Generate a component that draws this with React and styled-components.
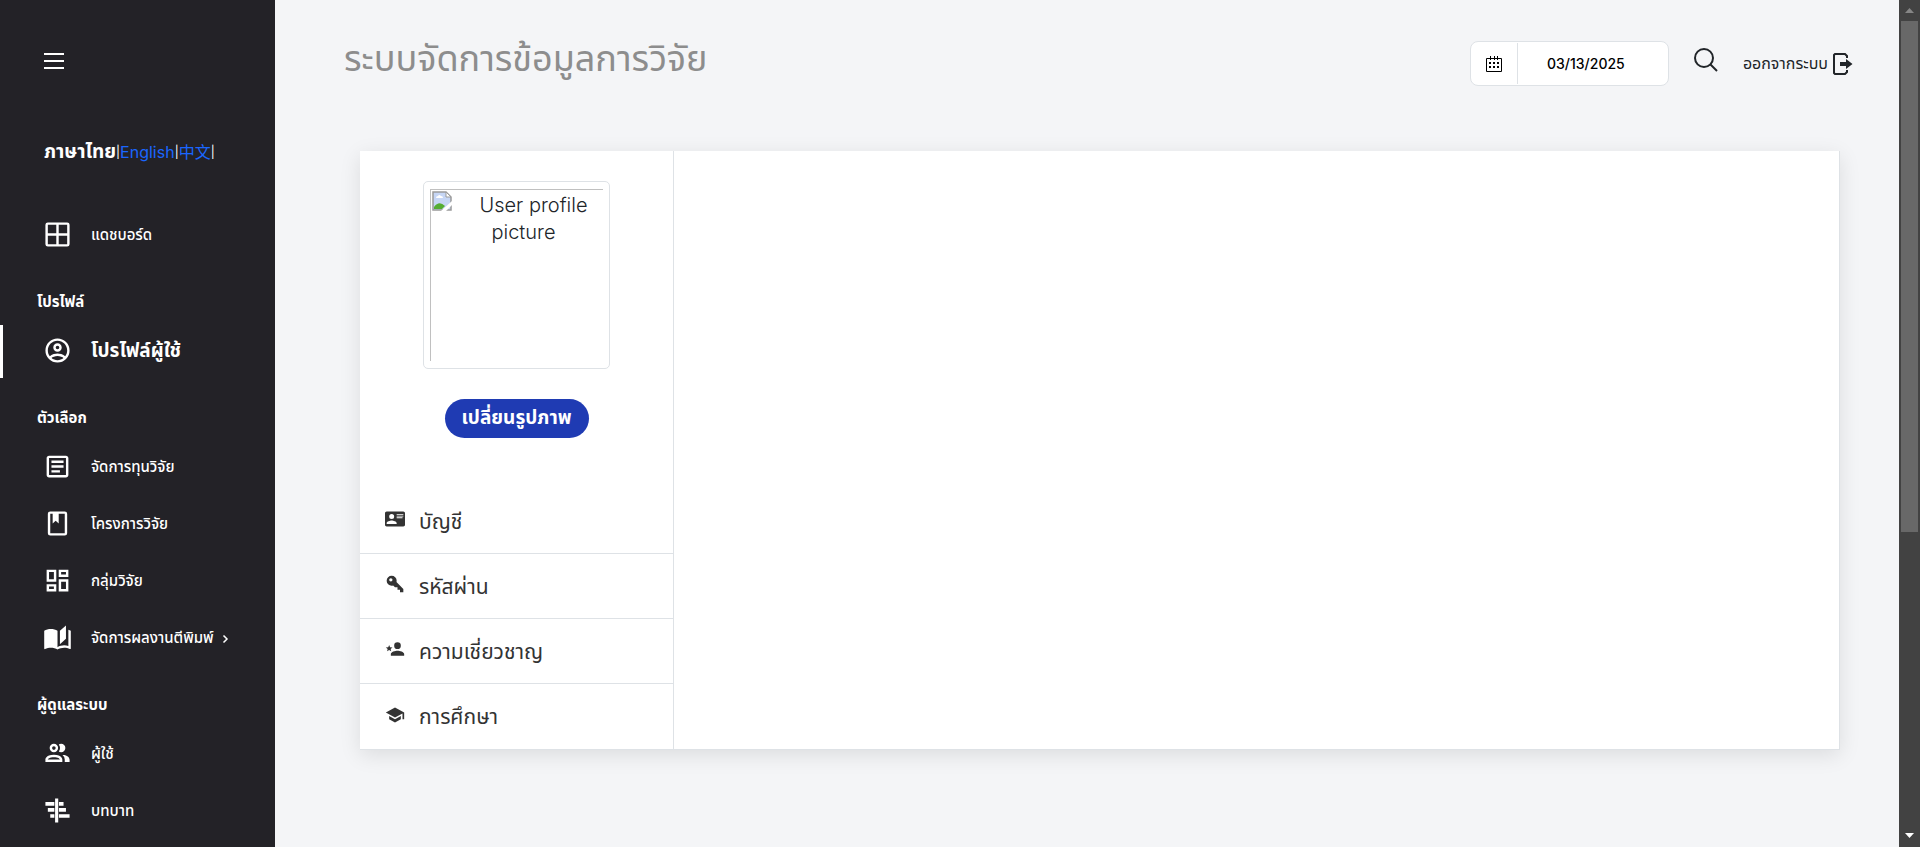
import React from 'react';
import styled, { createGlobalStyle } from 'styled-components';

const GlobalStyle = createGlobalStyle`
  *, *::before, *::after { box-sizing: border-box; }
  body {
    margin: 0;
    background: #f4f5f7;
    color: #212529;
    font-family: Inter, "Noto Sans", "Noto Sans Thai", Tahoma, "Noto Sans CJK SC", sans-serif;
    font-size: 16px;
  }
  a { color: inherit; text-decoration: none; }
  button { font: inherit; color: inherit; cursor: pointer; }
  h1, h2, p { margin: 0; padding: 0; }
`;

const Page = styled.div`
  display: flex;
  min-height: 100vh;
`;

const Sidebar = styled.aside`
  width: 275px;
  flex: none;
  background: #232227;
  color: #fff;
`;

const MenuButton = styled.button`
  display: flex;
  margin: 48px 0 0 42px;
  padding: 0;
  border: 0;
  background: none;
  color: #fff;
`;

const Languages = styled.div`
  display: flex;
  align-items: center;
  height: 24px;
  margin: 66px 0 45px 44px;
  line-height: 24px;
  white-space: nowrap;

  b { font-size: 19px; }
  a { color: #1a66ff; }
`;

const Divider = styled.span`
  font-size: 12px;
`;

const NavHeading = styled.h2`
  padding: 25px 0 12px 37px;
  font-size: 15px;
  line-height: 22px;
  font-weight: 700;
`;

const NavLink = styled.a`
  display: flex;
  align-items: center;
  gap: 19px;
  height: 53px;
  margin-bottom: 4px;
  padding-left: 40px;
  border-left: 3px solid ${(p) => (p.$active ? '#fff' : 'transparent')};
  font-size: ${(p) => (p.$active ? 19 : 15)}px;
  font-weight: ${(p) => (p.$active ? 700 : 500)};
  white-space: nowrap;

  > svg { margin-bottom: 2px; }
`;

const LinkText = styled.span`
  display: flex;
  align-items: center;
  gap: 6px;
`;

const Main = styled.main`
  flex: 1;
  min-width: 0;
`;

const Header = styled.header`
  display: flex;
  align-items: center;
  padding: 36px 46px 0 69px;
`;

const Title = styled.h1`
  flex: 1;
  height: 55px;
  color: #8d8d8d;
  font-size: 36px;
  line-height: 44px;
  font-weight: 400;
  white-space: nowrap;
`;

const DateField = styled.label`
  display: flex;
  align-items: center;
  width: 199px;
  height: 45px;
  border: 1px solid #dee2e6;
  border-radius: 8px;
  background: #fff;
  color: #000;
`;

const DateIcon = styled.span`
  display: flex;
  align-items: center;
  justify-content: center;
  width: 47px;
  height: 41px;
  border-right: 1px solid #dee2e6;
`;

const DateInput = styled.input`
  flex: 1;
  min-width: 0;
  padding: 0 14px 0 0;
  border: 0;
  outline: 0;
  background: none;
  color: #000;
  font: 500 14px Inter, sans-serif;
  text-align: center;
`;

const SearchButton = styled.button`
  display: flex;
  margin: 0 24px;
  padding: 0 0 8px;
  border: 0;
  background: none;
`;

const Logout = styled.a`
  display: flex;
  align-items: center;
  gap: 5px;
  font-size: 16px;
  white-space: nowrap;
`;

const Card = styled.section`
  display: flex;
  margin: 60px 59px 0 85px;
  background: #fff;
  border: 1px solid #dee2e6;
  border-width: 0 1px 1px 0;
  box-shadow: 0 5px 20px rgba(0, 0, 0, 0.1);
`;

const ProfileColumn = styled.div`
  width: 314px;
  border-right: 1px solid #dee2e6;
`;

const ProfileTop = styled.div`
  display: flex;
  flex-direction: column;
  align-items: center;
  gap: 30px;
  height: 338px;
  padding-top: 30px;
`;

const Frame = styled.div`
  width: 187px;
  height: 188px;
  padding: 7px 6px;
  border: 1px solid #dee2e6;
  border-radius: 5px;
`;

const MissingPicture = styled.div`
  display: flex;
  height: 100%;
  border: 1px solid #c0c0c0;
  border-width: 1px 0 0 1px;
  padding: 1px;
`;

const AltText = styled.p`
  flex: 1;
  margin-left: -20px;
  padding: 1px 0 0 13px;
  font-size: 20px;
  line-height: 27px;
  font-weight: 300;
  text-align: center;
  text-indent: 20px;
`;

const ChangeButton = styled.button`
  width: 144px;
  height: 39px;
  padding: 0;
  border: 0;
  border-radius: 20px;
  background: #1f3bb3;
  color: #fff;
  font-size: 19px;
  font-weight: 700;
  white-space: nowrap;
`;

const Tab = styled.a`
  display: flex;
  align-items: center;
  gap: 14px;
  height: 65px;
  padding: 2px 0 0 25px;
  border-bottom: ${(p) => (p.$last ? 0 : 1)}px solid #dee2e6;
  color: #333;
  font-size: 21px;

  svg { margin-bottom: 6px; }
`;

const Scrollbar = styled.div`
  display: flex;
  flex-direction: column;
  align-items: center;
  width: 21px;
  height: 100vh;
  flex: none;
  background: #424242;
`;

const ScrollArrow = styled.svg`
  flex: none;
  width: 21px;
  height: 21px;
`;

const ScrollTrack = styled.div`
  flex: 1;
  width: 17px;
`;

const ScrollThumb = styled.div`
  height: 63.5%;
  background: #686868;
`;

const paths = {
  grid: 'M4,2A2,2 0 0,0 2,4V20A2,2 0 0,0 4,22H20A2,2 0 0,0 22,20V4A2,2 0 0,0 20,2H4M4,4H11V11H4V4M20,4V11H13V4H20M20,20H13V13H20V20M11,13V20H4V13H11Z',
  user: 'M12,2A10,10 0 0,0 2,12A10,10 0 0,0 12,22A10,10 0 0,0 22,12A10,10 0 0,0 12,2M7.07,18.28C7.5,17.38 10.12,16.5 12,16.5C13.88,16.5 16.5,17.38 16.93,18.28C15.57,19.36 13.86,20 12,20C10.14,20 8.43,19.36 7.07,18.28M18.36,16.83C16.93,15.09 13.46,14.5 12,14.5C10.54,14.5 7.07,15.09 5.64,16.83C4.62,15.5 4,13.82 4,12C4,7.59 7.59,4 12,4C16.41,4 20,7.59 20,12C20,13.82 19.38,15.5 18.36,16.83M12,6C10.06,6 8.5,7.56 8.5,9.5C8.5,11.44 10.06,13 12,13C13.94,13 15.5,11.44 15.5,9.5C15.5,7.56 13.94,6 12,6M12,11A1.5,1.5 0 0,1 10.5,9.5A1.5,1.5 0 0,1 12,8A1.5,1.5 0 0,1 13.5,9.5A1.5,1.5 0 0,1 12,11Z',
  document: 'M19,5V19H5V5H19M19,3H5C3.89,3 3,3.89 3,5V19C3,20.1 3.9,21 5,21H19C20.1,21 21,20.1 21,19V5C21,3.89 20.1,3 19,3M17,7H7V9H17V7M17,11H7V13H17V11M14,15H7V17H14V15Z',
  book: 'M18,2A2,2 0 0,1 20,4V20A2,2 0 0,1 18,22H6A2,2 0 0,1 4,20V4A2,2 0 0,1 6,2H18M18,4H13V12L10.5,9.75L8,12V4H6V20H18V4Z',
  dashboard: 'M19,5V7H15V5H19M9,5V11H5V5H9M19,13V19H15V13H19M9,17V19H5V17H9M21,3H13V9H21V3M11,3H3V13H11V3M21,11H13V21H21V11M11,15H3V21H11V15Z',
  openBook: 'M19,2L14,6.5V17.5L19,13V2M6.5,5C4.55,5 2.45,5.4 1,6.5V21.16C1,21.41 1.25,21.66 1.5,21.66C1.6,21.66 1.65,21.59 1.75,21.59C3.1,20.94 5.05,20.5 6.5,20.5C8.45,20.5 10.55,20.9 12,22C13.35,21.15 15.8,20.5 17.5,20.5C19.15,20.5 20.85,20.81 22.25,21.56C22.35,21.61 22.4,21.59 22.5,21.59C22.75,21.59 23,21.34 23,21.09V6.5C22.4,6.05 21.75,5.75 21,5.5V19C19.9,18.65 18.7,18.5 17.5,18.5C15.8,18.5 13.35,19.15 12,20V6.5C10.55,5.4 8.45,5 6.5,5Z',
  users: 'M13.07 10.41A5 5 0 0 0 13.07 4.59A3.39 3.39 0 0 1 15 4A3.5 3.5 0 0 1 15 11A3.39 3.39 0 0 1 13.07 10.41M5.5 7.5A3.5 3.5 0 1 1 9 11A3.5 3.5 0 0 1 5.5 7.5M7.5 7.5A1.5 1.5 0 1 0 9 6A1.5 1.5 0 0 0 7.5 7.5M16 17V19H2V17S2 13 9 13 16 17 16 17M14 17C13.86 16.22 12.67 15 9 15S4.07 16.31 4 17M15.95 13A5.32 5.32 0 0 1 18 17V19H22V17S22 13.37 15.94 13Z',
  roles: 'M10,2H12.6V22H10ZM2,5H9.4V8H2ZM13.2,5H17V8H13.2ZM4,10H9.4V13H4ZM13.2,10H19V13H13.2ZM6,15H9.4V18H6ZM13.2,15H22V18H13.2Z',
  card: 'M2,3H22C23.05,3 24,3.95 24,5V19C24,20.05 23.05,21 22,21H2C0.95,21 0,20.05 0,19V5C0,3.95 0.95,3 2,3M14,6V7H22V6H14M14,8V9H22V8H14M14,10V11H21V10H14M8,13.91C6,13.91 2,15 2,17V18H14V17C14,15 10,13.91 8,13.91M8,6A3,3 0 0,0 5,9A3,3 0 0,0 8,12A3,3 0 0,0 11,9A3,3 0 0,0 8,6Z',
  key: 'M22,18V22H18V19H15V16H12L9.74,13.74C9.19,13.91 8.61,14 8,14A6,6 0 0,1 2,8A6,6 0 0,1 8,2A6,6 0 0,1 14,8C14,8.61 13.91,9.19 13.74,9.74L22,18M7,5A2,2 0 0,0 5,7A2,2 0 0,0 7,9A2,2 0 0,0 9,7A2,2 0 0,0 7,5Z',
  star: 'M15,14C12.33,14 7,15.33 7,18V20H23V18C23,15.33 17.67,14 15,14M15,12A4,4 0 0,0 19,8A4,4 0 0,0 15,4A4,4 0 0,0 11,8A4,4 0 0,0 15,12M5,13.28L7.45,14.77L6.8,11.96L9,10.08L6.11,9.83L5,7.19L3.87,9.83L1,10.08L3.18,11.96L2.5,14.77L5,13.28Z',
  school: 'M12,3L1,9L12,15L21,10.09V17H23V9M5,13.18V17.18L12,21L19,17.18V13.18L12,17L5,13.18Z',
};

function Icon({ name, size }) {
  return (
    <svg width={size} height={size} viewBox="0 0 24 24" fill="currentColor" aria-hidden="true">
      <path fillRule={name === 'users' ? 'evenodd' : 'nonzero'} d={paths[name]} />
    </svg>
  );
}

function NavItem({ icon, children, active, more }) {
  return (
    <NavLink href="#" $active={active}>
      <Icon name={icon} size={29} />
      <LinkText>
        {children}
        {more && (
          <svg width="10" height="10" viewBox="0 0 10 10" fill="none" stroke="#fff" strokeWidth="1.5">
            <path d="M3.5 1.5L7 5L3.5 8.5" />
          </svg>
        )}
      </LinkText>
    </NavLink>
  );
}

const tabs = [
  ['card', 'บัญชี'],
  ['key', 'รหัสผ่าน'],
  ['star', 'ความเชี่ยวชาญ'],
  ['school', 'การศึกษา'],
];

export default function App() {
  return (
    <Page>
      <GlobalStyle />
      <Sidebar>
        <MenuButton aria-label="Menu">
          <svg width="24" height="26" viewBox="0 0 24 26" stroke="#fff" strokeWidth="2">
            <path d="M2 6H22M2 13H22M2 20H22" />
          </svg>
        </MenuButton>
        <Languages>
          <b>ภาษาไทย</b>
          <Divider>|</Divider>
          <a href="#">English</a>
          <Divider>|</Divider>
          <a href="#" lang="zh">中文</a>
          <Divider>|</Divider>
        </Languages>
        <nav>
          <NavItem icon="grid">แดชบอร์ด</NavItem>
          <NavHeading>โปรไฟล์</NavHeading>
          <NavItem icon="user" active>โปรไฟล์ผู้ใช้</NavItem>
          <NavHeading>ตัวเลือก</NavHeading>
          <NavItem icon="document">จัดการทุนวิจัย</NavItem>
          <NavItem icon="book">โครงการวิจัย</NavItem>
          <NavItem icon="dashboard">กลุ่มวิจัย</NavItem>
          <NavItem icon="openBook" more>จัดการผลงานตีพิมพ์</NavItem>
          <NavHeading>ผู้ดูแลระบบ</NavHeading>
          <NavItem icon="users">ผู้ใช้</NavItem>
          <NavItem icon="roles">บทบาท</NavItem>
        </nav>
      </Sidebar>
      <Main>
        <Header>
          <Title>ระบบจัดการข้อมูลการวิจัย</Title>
          <DateField>
            <DateIcon>
              <svg width="16" height="16" viewBox="0 0 16 16" fill="none" stroke="#000">
                <path d="M0.5 2.5H15.5V15.5H0.5ZM4.5 0V4M8.5 0V4M11.5 0V4" />
                <path strokeWidth="2" strokeDasharray="2 2" d="M3 7H13M3 11H13" />
              </svg>
            </DateIcon>
            <DateInput aria-label="Date" defaultValue="03/13/2025" />
          </DateField>
          <SearchButton aria-label="Search">
            <svg width="26" height="26" viewBox="0 0 26 26" fill="none" stroke="#212529" strokeWidth="2">
              <circle cx="11" cy="11" r="9" />
              <path d="M17 17L24 24" />
            </svg>
          </SearchButton>
          <Logout href="#">
            ออกจากระบบ
            <svg width="20" height="22" viewBox="0 0 20 22" fill="none" stroke="#212529" strokeWidth="2">
              <path d="M14 5V3L12 1H2L1 2V20L2 21H12L14 19V17" />
              <path fill="#212529" stroke="none" d="M7 9H13V6L19.5 11L13 16V13H7Z" />
            </svg>
          </Logout>
        </Header>
        <Card>
          <ProfileColumn>
            <ProfileTop>
              <Frame>
                <MissingPicture>
                  <svg width="20" height="20" viewBox="0 0 20 20" aria-hidden="true">
                    <path fill="#c6d6f5" stroke="#9b9b9b" strokeWidth="1.5" d="M1 1H14L19 6V19H1Z" />
                    <path fill="#fff" d="M4 7Q4 5 6 5Q7 3 9 5Q11 5 11 7Z" />
                    <path fill="#55ad33" d="M2 18V16Q7 9 13 15L10 18Z" />
                    <path fill="#fff" d="M9 20L20 10V14L14 20Z" />
                    <path fill="#fff" stroke="#9b9b9b" d="M14 1V6H19Z" />
                  </svg>
                  <AltText>User profile picture</AltText>
                </MissingPicture>
              </Frame>
              <ChangeButton>เปลี่ยนรูปภาพ</ChangeButton>
            </ProfileTop>
            <nav>
              {tabs.map(([icon, label], i) => (
                <Tab key={icon} href="#" $last={i === tabs.length - 1}>
                  <Icon name={icon} size={20} />
                  {label}
                </Tab>
              ))}
            </nav>
          </ProfileColumn>
        </Card>
      </Main>
      <Scrollbar aria-hidden="true">
        <ScrollArrow viewBox="0 0 21 21" fill="#868686">
          <path d="M6 13H15L10.5 8Z" />
        </ScrollArrow>
        <ScrollTrack>
          <ScrollThumb />
        </ScrollTrack>
        <ScrollArrow viewBox="0 0 21 21" fill="#fff">
          <path d="M6 7H15L10.5 12Z" />
        </ScrollArrow>
      </Scrollbar>
    </Page>
  );
}
